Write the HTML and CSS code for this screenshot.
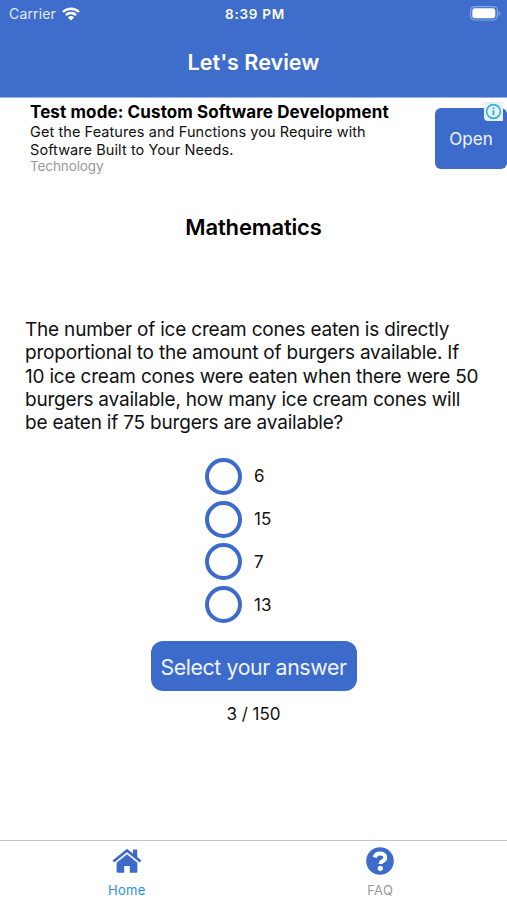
FILE: index.html
```html
<!DOCTYPE html>
<html lang="en">
  <head>
    <meta charset="UTF-8" />
    <meta name="viewport" content="width=device-width, initial-scale=1.0" />
    <title>Let's Review</title>
    <link rel="stylesheet" href="styles.css">
  </head>

  <body>
    <header class="header">
      <div class="status-bar">
        <div class="carrier">
          <span>Carrier</span>
          <svg class="wifi" viewBox="0 0 18 14" width="18" height="14">
            <path d="M1 5a11.5 11.5 0 0 1 16 0M3.9 8.1a7.3 7.3 0 0 1 10.2 0" fill="none" stroke="#fff" stroke-width="2.3" />
            <path d="M9 13.6L5.9 10.4a4.4 4.4 0 0 1 6.2 0z" fill="#fff" />
          </svg>
        </div>
        <div class="time">8:39 PM</div>
        <svg class="battery" viewBox="0 0 31 15" width="31" height="15">
          <rect x="0.6" y="0.6" width="26.8" height="13.4" rx="4" fill="none" stroke="#fff" stroke-opacity="0.4" stroke-width="1.2" />
          <rect x="2.3" y="2.3" width="23" height="10" rx="2.4" fill="#fff" />
          <path d="M28.7 5v4.8q1.6-.8 1.6-2.4T28.7 5z" fill="#fff" fill-opacity="0.4" />
        </svg>
      </div>
      <h1>Let's Review</h1>
    </header>

    <section class="ad">
      <div class="ad-text">
        <h2>Test mode: Custom Software Development</h2>
        <p>Get the Features and Functions you Require with<br />Software Built to Your Needs.</p>
        <span class="ad-category">Technology</span>
      </div>
      <div class="ad-action">
        <button class="ad-open">Open</button>
        <svg class="ad-info" viewBox="0 0 19 19" width="19" height="19">
          <path d="M0 0h19v19H4a4 4 0 0 1-4-4z" fill="#e9eff8" />
          <circle cx="9.5" cy="9.5" r="6.9" fill="none" stroke="#28b4d2" stroke-width="1.6" />
          <path d="M9.5 8.3v5M9.5 5.3v1.8" stroke="#28b4d2" stroke-width="1.8" />
        </svg>
      </div>
    </section>

    <main class="quiz">
      <h2 class="subject">Mathematics</h2>
      <p class="question">
        The number of ice cream cones eaten is directly<br />
        proportional to the amount of burgers available. If<br />
        10 ice cream cones were eaten when there were 50<br />
        burgers available, how many ice cream cones will<br />
        be eaten if 75 burgers are available?
      </p>
      <ul class="answers">
        <li><span class="circle"></span>6</li>
        <li><span class="circle"></span>15</li>
        <li><span class="circle"></span>7</li>
        <li><span class="circle"></span>13</li>
      </ul>
      <button class="select">Select your answer</button>
      <p class="progress">3 / 150</p>
    </main>

    <nav class="tabs">
      <a class="tab tab-active">
        <svg viewBox="0 0 30 28" width="30" height="28">
          <path d="M15 7.2L25.4 15.800v9.200q0 .8-.8.8H17.800V19h-5.600v6.800H5.400q-.8 0-.8-.8v-9.200z" fill="#3c6bcb" />
          <path d="M21 2.600h4.200v10l-4.200-3.400z" fill="#3c6bcb" />
          <path d="M1.400 14.600L15 3.500 28.600 14.600" fill="none" stroke="#3c6bcb" stroke-width="2.600" />
        </svg>
        <span>Home</span>
      </a>
      <a class="tab">
        <svg viewBox="0 0 28 28" width="28" height="28">
          <circle cx="14" cy="14" r="13.8" fill="#3c6bcb" />
          <path d="M8.600 10.400C9.400 7.700 11.200 6.500 14 6.500c3.100 0 5.300 1.500 5.300 4.200 0 3.500-4.900 3.200-4.900 6.300" fill="none" stroke="#fff" stroke-width="4" />
          <circle cx="14.300" cy="21.300" r="2.600" fill="#fff" />
        </svg>
        <span>FAQ</span>
      </a>
    </nav>
  </body>
</html>
```

FILE: styles.css
```css
* {
  margin: 0;
  padding: 0;
  box-sizing: border-box;
}

body {
  display: flex;
  flex-direction: column;
  height: 900px;
  background: #fff;
  color: #111;
  font-family: Inter, "Liberation Sans", sans-serif;
  overflow: hidden;
}

button {
  border: none;
  background: #3c6bcb;
  color: #f0f5ff;
  font-family: inherit;
}

.header {
  height: 98px;
  background: #3e6dcc;
  border-bottom: 1px solid #9ab2e4;
  color: #fff;
}

.status-bar {
  display: grid;
  grid-template-columns: 1fr auto 1fr;
  align-items: center;
  height: 27px;
  padding: 0 6px 0 9px;
}

.carrier {
  display: flex;
  align-items: center;
  gap: 6px;
  font-size: 14px;
  letter-spacing: 0.15px;
  color: #e4ebfa;
}

.time {
  font-size: 13.5px;
  font-weight: 600;
  letter-spacing: 0.75px;
}

.battery {
  justify-self: end;
}

.header h1 {
  margin-top: 22px;
  font-size: 21.6px;
  font-weight: 600;
  line-height: 26px;
  text-align: center;
}

.ad {
  display: flex;
  justify-content: space-between;
  height: 82px;
  padding-left: 30px;
}

.ad-text {
  padding-top: 4px;
  white-space: nowrap;
}

.ad-text h2 {
  font-size: 17px;
  font-weight: 700;
  line-height: 21px;
  letter-spacing: 0.11px;
  color: #000;
}

.ad-text p {
  font-size: 14.5px;
  line-height: 17.5px;
  letter-spacing: 0.08px;
}

.ad-category {
  display: block;
  font-size: 13.5px;
  line-height: 17px;
  letter-spacing: -0.1px;
  color: #999;
}

.ad-action {
  position: relative;
  width: 72px;
  padding-top: 10px;
}

.ad-open {
  width: 72px;
  height: 61px;
  border-radius: 6px;
  font-size: 17px;
}

.ad-info {
  position: absolute;
  top: 4px;
  right: 4px;
}

.quiz {
  flex: 1;
  display: flex;
  flex-direction: column;
  align-items: center;
}

.subject {
  margin-top: 33px;
  font-size: 22px;
  font-weight: 600;
  line-height: 28px;
  letter-spacing: -0.15px;
  color: #000;
}

.question {
  align-self: stretch;
  margin-top: 77px;
  padding-left: 25px;
  font-size: 19px;
  line-height: 23.35px;
  letter-spacing: -0.2px;
  white-space: nowrap;
}

.answers {
  width: 98px;
  margin-top: 23px;
  list-style: none;
}

.answers li {
  display: flex;
  align-items: center;
  gap: 12.5px;
  height: 37px;
  margin-bottom: 5.8px;
  font-size: 17px;
}

.circle {
  width: 37px;
  height: 37px;
  border: 4px solid #3c6bcb;
  border-radius: 50%;
}

.select {
  width: 206px;
  height: 50px;
  margin-top: 12px;
  padding-top: 2px;
  border-radius: 12px;
  font-size: 21.3px;
  letter-spacing: -0.38px;
  white-space: nowrap;
}

.progress {
  margin-top: 12px;
  font-size: 17px;
  line-height: 22px;
}

.tabs {
  display: grid;
  grid-template-columns: 1fr 1fr;
  height: 60px;
  border-top: 1px solid #c4c4c4;
}

.tab {
  display: flex;
  flex-direction: column;
  align-items: center;
  height: 59px;
  padding-top: 6px;
  font-size: 13px;
  line-height: 16px;
  letter-spacing: 0.3px;
  color: #999;
}

.tab svg {
  margin-bottom: 7px;
}

.tab-active {
  color: #2b8df0;
}
```
